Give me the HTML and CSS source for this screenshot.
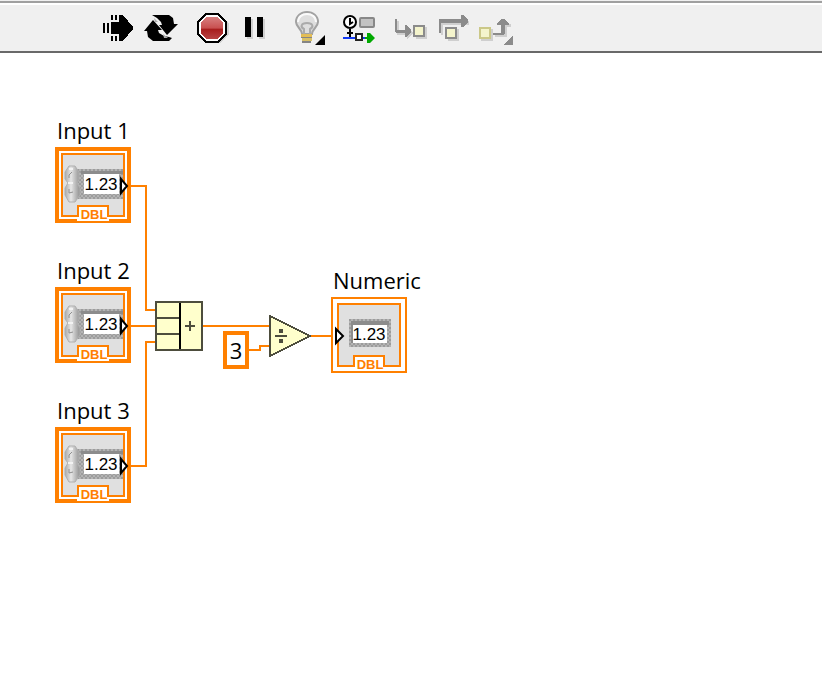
FILE: index.html
```
<!DOCTYPE html>
<html lang="en">
<head>
<meta charset="utf-8">
<title>Block Diagram</title>
<link rel="stylesheet" href="styles.css">
</head>
<body>
<header class="toolbar">
  <div class="group">
    <button class="tool" type="button" aria-label="Run"><svg viewBox="97 5 43 46">
      <path d="M111 15h2v5h-2zM115 15h2v5h-2zM111 36h2v5h-2zM115 36h2v5h-2zM103 23h2v10h-2zM107 23h2v10h-2z"/>
      <path d="M111 22h8v-7h4l10 12v2l-10 12h-4v-7h-8z"/></svg></button>
    <button class="tool" type="button" aria-label="Run Continuously"><svg class="smooth" viewBox="140 5 43 46">
      <path d="M152 15h17l4 3 1 6h4l-11 11-8-10h3l-1-3-4-4z"/>
      <path d="M144 31l9-11 9 10h-4l1 3 5 3 5 1 3 1-3 3h-16l-5-4-1-6z"/>
      <path fill="#aaa" d="M154 18l4 4h-3zM163 34l5 4h-4z"/></svg></button>
  </div>
  <div class="group">
    <button class="tool" type="button" aria-label="Abort Execution"><svg viewBox="191 5 43 46">
      <defs><linearGradient id="red" x1="0" y1="0" x2="0" y2="1"><stop offset="0" stop-color="#d88080"/><stop offset=".5" stop-color="#c85050"/><stop offset=".56" stop-color="#a81e1e"/><stop offset="1" stop-color="#b84444"/></linearGradient></defs>
      <path fill="#d2d2d2" d="M208 15h12l9 9v10l-9 9h-11z"/>
      <path fill="#fff" stroke="#000" stroke-width="2" d="M206 14h12l8 8v12l-8 8h-12l-8-8V22z"/>
      <path fill="url(#red)" d="M206 17h12l5 6v10l-5 6h-12l-5-6V23z"/></svg></button>
    <button class="tool" type="button" aria-label="Pause"><svg viewBox="234 5 43 46">
      <path fill="#d0d0d0" d="M247 19h6v20h-6zM259 19h6v20h-6z"/><path d="M245 17h6v20h-6zM257 17h6v20h-6z"/></svg></button>
  </div>
  <div class="group">
    <button class="tool" type="button" aria-label="Highlight Execution"><svg class="smooth" viewBox="285 5 43 46">
      <path fill="#dedede" stroke="#a2a2a2" stroke-width="2" d="M302 34c0-5-6-7-6-12 0-6 5-10 11-10s11 4 11 10c0 5-6 7-6 12z"/>
      <path fill="none" stroke="#fafafa" stroke-width="2" d="M298 22c0-5 4-8 9-8s9 3 9 8"/>
      <path fill="none" stroke="#aaa" stroke-width="2" d="M304 34v-5c-4-2-3-6 3-6s7 4 3 6v5"/>
      <path fill="#e3bd55" d="M301 34h11v3h-11z"/><path fill="#858585" d="M301 37h11v1h-11zM302 41h9v2h-9z"/><path fill="#d8c066" d="M302 38h10v3h-10z"/>
      <path d="M325 35v10h-10z"/></svg></button>
  </div>
  <div class="group">
    <button class="tool" type="button" aria-label="Retain Wire Values"><svg class="smooth" viewBox="336 5 43 46">
      <circle cx="350" cy="22" r="6" fill="#fff" stroke="#000" stroke-width="2"/><path fill="none" stroke="#000" stroke-width="2" d="M350 18v6l3-2M350 29v8M347 33h6"/>
      <rect x="360" y="18" width="14" height="9" rx="1" fill="#c2c2c2" stroke="#888" stroke-width="2"/>
      <path stroke="#1038f4" stroke-width="2" d="M343 38h24"/><path fill="#00a900" d="M365 37h2v-4h3l5 5-5 5h-3v-4h-2z"/><rect x="356" y="34" width="6" height="6" fill="#fff" stroke="#222" stroke-width="2"/></svg></button>
  </div>
  <div class="group">
    <button class="tool" type="button" aria-label="Step Into"><svg viewBox="387 5 43 46">
      <path fill="#cfcfcf" d="M397 21h2v9h8v-3l6 6-6 6v-4h-10zM416 27h11v12h-11z"/>
      <path fill="#8b8b8b" d="M395 19h2v11h8v-5h2l4 5v2l-4 5h-2v-4h-9l-1-1z"/><rect x="414" y="26" width="10" height="10" fill="#f4f4cc" stroke="#8b8b8b" stroke-width="2"/></svg></button>
    <button class="tool" type="button" aria-label="Step Over"><svg viewBox="430 5 43 46">
      <path fill="#cfcfcf" d="M441 21h28v4h-26v10h-2zM448 29h11v12h-11z"/>
      <path fill="#8b8b8b" d="M439 19h22v-4h2l5 5v2l-5 5h-2v-4h-20v10h-2z"/><rect x="446" y="28" width="10" height="10" fill="#f4f4cc" stroke="#8b8b8b" stroke-width="2"/></svg></button>
    <button class="tool" type="button" aria-label="Step Out"><svg viewBox="473 5 43 46">
      <path fill="#cfcfcf" d="M481 29h12v12h-12zM495 34h10V24h6v3h-4v10h-12z"/>
      <path fill="#8b8b8b" d="M493 33h8v-8h-4v-2l5-4h2l5 4v2h-4v8l-2 2h-10zM513 35v10h-10z"/><rect x="480" y="28" width="10" height="10" fill="#f4f4cc" stroke="#cbc888" stroke-width="2"/></svg></button>
  </div>
</header>

<main class="diagram">
  <svg class="sprites" aria-hidden="true">
    <defs>
      <pattern id="grain" width="4" height="4" patternUnits="userSpaceOnUse"><path fill="#b4b4b4" d="M0 0h4v4H0z"/><path fill="#9c9c9c" d="M0 0h2v2H0zM2 2h2v2H2z"/></pattern>
      <linearGradient id="knob"><stop offset="0" stop-color="#aaa"/><stop offset=".4" stop-color="#e6e6e6"/><stop offset="1" stop-color="#909090"/></linearGradient>
      <symbol id="control" viewBox="0 0 76 76">
        <path fill="#fff" d="M0 0h76v76H0z"/><path fill="#e0e0e0" stroke="#ff8000" stroke-width="2" d="M7 7h62v62H7z"/>
        <path fill="none" stroke="#ff8000" stroke-width="4" d="M2 2h72v72H2z"/>
        <path fill="url(#grain)" d="M22 22h46v30H22z"/><path fill="#8c8c8c" d="M26 24h42v3H26z"/><path fill="#fff" d="M29 27h35v20H29z"/>
        <path class="knob" fill="url(#knob)" stroke="#b0b0b0" d="M14 19h6l4 6v8l-2 3 3 5v7l-5 7h-6l-4-7v-7l3-5-3-4v-7z"/>
        <path class="knob" fill="none" stroke="#909090" d="M14 31v-3l3-3M14 42v4l4-1"/><path fill="#f3f3f3" d="M14 21h4v2h-4zM13 35h5v2h-5z"/>
        <path class="knob" fill="#fff" stroke="#000" stroke-width="2" d="M66 32v14l6-7z"/>
        <path fill="#fff" d="M22 58h32v16H22z"/><path fill="none" stroke="#ff8000" stroke-width="2" d="M22 69h1V59h30v10h1"/>
      </symbol>
      <symbol id="indicator" viewBox="0 0 76 76">
        <path fill="#fff" stroke="#ff8000" stroke-width="2" d="M1 1h74v74H1z"/><path fill="#e0e0e0" stroke="#ff8000" stroke-width="2" d="M7 7h62v62H7z"/>
        <path fill="url(#grain)" d="M18 22h42v28H18z"/><path fill="#8c8c8c" d="M20 24h38v4H22v18h-2z"/><path fill="#fff" d="M22 28h34v18H22z"/>
        <path class="knob" fill="#fff" stroke="#000" stroke-width="2" d="M5 32v14l7-7z"/>
        <path fill="#fff" d="M22 58h32v16H22z"/><path fill="none" stroke="#ff8000" stroke-width="2" d="M22 69h1V59h30v10h1"/>
      </symbol>
    </defs>
  </svg>
  <svg class="wires" width="420" height="440" aria-hidden="true">
    <path class="wire" d="M130 133h16v124h10M130 273h26M130 413h16V289h10M202 273h68M248 297h12v-4h10M310 283h22"/>
    <path fill="#ffffcc" stroke="#4d4d3d" stroke-width="2" d="M156 249h46v48h-46zM157 265h22M157 281h22M185 273h10M190 268v10"/>
    <path d="M179 250h2v46h-2z"/>
    <path fill="#ffffcc" stroke="#4d4d3d" stroke-width="2" d="M270 263v40l40-20z"/>
    <path fill="#4d4d3d" d="M275 282h12v2h-12zM279 276h4v4h-4zM279 286h4v4h-4z"/>
  </svg>

  <figure class="node input-1"><figcaption>Input 1</figcaption>
    <svg class="terminal" viewBox="0 0 76 76"><use href="#control"/><text class="value" x="46" y="43">1.23</text><text class="type" x="39" y="72">DBL</text></svg></figure>
  <figure class="node input-2"><figcaption>Input 2</figcaption>
    <svg class="terminal" viewBox="0 0 76 76"><use href="#control"/><text class="value" x="46" y="43">1.23</text><text class="type" x="39" y="72">DBL</text></svg></figure>
  <figure class="node input-3"><figcaption>Input 3</figcaption>
    <svg class="terminal" viewBox="0 0 76 76"><use href="#control"/><text class="value" x="46" y="43">1.23</text><text class="type" x="39" y="72">DBL</text></svg></figure>
  <figure class="node numeric"><figcaption>Numeric</figcaption>
    <svg class="terminal" viewBox="0 0 76 76"><use href="#indicator"/><text class="value" x="38" y="43">1.23</text><text class="type" x="39" y="72">DBL</text></svg></figure>
  <div class="constant">3</div>
</main>
</body>
</html>
```
FILE: styles.css
```
* { box-sizing: border-box; }

body {
  margin: 0;
  min-height: 100vh;
  display: flex;
  flex-direction: column;
  background: #fff;
  color: #000;
  font-family: "Open Sans", "Noto Sans", sans-serif;
}

svg { display: block; shape-rendering: crispEdges; }

.smooth, .knob { shape-rendering: auto; }

.toolbar {
  display: flex;
  gap: 8px;
  padding: 2px 0 0 97px;
  border-top: 1px solid #f0f0f0;
  border-bottom: 2px solid #696969;
  background: linear-gradient(#a0a0a0 2px, #fff 2px, #fff 4px, #f0f0f0 4px);
}

.group { display: flex; padding-top: 2px; }

.tool {
  width: 43px;
  height: 46px;
  padding: 0;
  border: 0;
  background: transparent;
}

.tool svg { width: 43px; height: 46px; }

.diagram { position: relative; flex: 1; }

.sprites { position: absolute; width: 0; height: 0; }

.wires { position: absolute; left: 0; top: 0; }

.wire { fill: none; stroke: #ff8000; stroke-width: 2; }

.node { position: absolute; margin: 0; }

.node figcaption {
  padding: 0 0 2px 2px;
  font-size: 22px;
  line-height: 30px;
  white-space: nowrap;
}

.terminal { width: 76px; height: 76px; }

.input-1 { left: 55px; top: 62px; }
.input-2 { left: 55px; top: 202px; }
.input-3 { left: 55px; top: 342px; }
.numeric { left: 331px; top: 212px; }

.value, .type { font-family: "Liberation Sans", sans-serif; text-anchor: middle; }

.value { font-size: 17px; }

.type { font-size: 13px; font-weight: 700; fill: #ff8000; }

.constant {
  position: absolute;
  left: 223px;
  top: 278px;
  width: 26px;
  height: 38px;
  border: 4px solid #ff8000;
  background: #fff;
  font-size: 22px;
  line-height: 30px;
  text-align: center;
}
```
